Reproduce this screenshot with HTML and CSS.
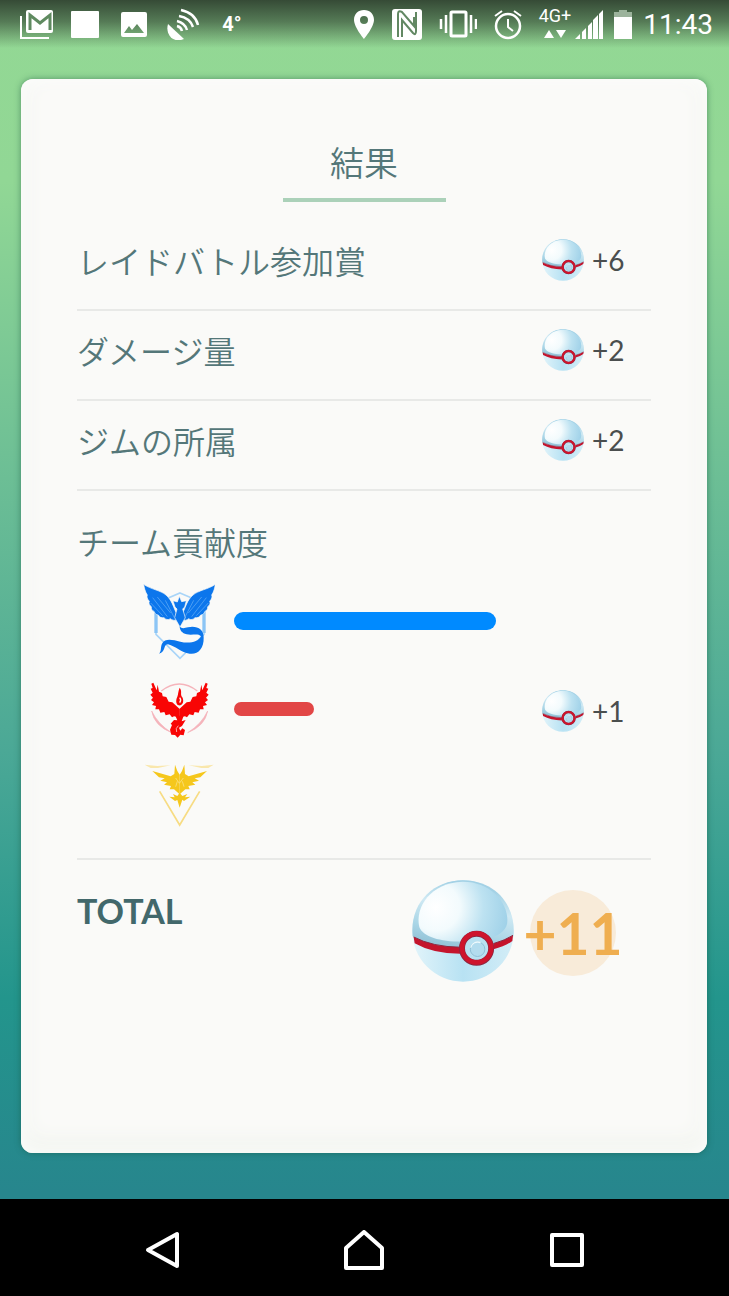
FILE: index.html
```html
<!DOCTYPE html>
<html lang="ja">
<head>
  <meta charset="UTF-8">
  <meta name="viewport" content="width=device-width, initial-scale=1">
  <title>結果</title>
  <link rel="stylesheet" href="styles.css">
</head>
<body>
  <!-- Shared ball drawing, used by every reward -->
  <svg class="defs" width="0" height="0" aria-hidden="true">
    <defs>
      <radialGradient id="ballTop" gradientUnits="userSpaceOnUse" cx="110" cy="140" r="240">
        <stop offset="0" stop-color="#ffffff"/>
        <stop offset="0.3" stop-color="#f3fbfd"/>
        <stop offset="0.6" stop-color="#bde2f1"/>
        <stop offset="1" stop-color="#98cde6"/>
      </radialGradient>
      <linearGradient id="ballBottom" x1="0" y1="0" x2="1" y2="0">
        <stop offset="0" stop-color="#e2f4fa"/>
        <stop offset="0.5" stop-color="#b8e2f3"/>
        <stop offset="1" stop-color="#d3edf7"/>
      </linearGradient>
      <linearGradient id="ballRim" x1="0" y1="1" x2="0.3" y2="0">
        <stop offset="0" stop-color="#86b8ce"/>
        <stop offset="0.35" stop-color="#a9d5e6"/>
        <stop offset="0.7" stop-color="#cfe9f3"/>
        <stop offset="1" stop-color="#a3d1e5"/>
      </linearGradient>
    </defs>
    <symbol id="ball" viewBox="38 58 308 308">
      <circle cx="192" cy="212" r="153" fill="url(#ballBottom)"/>
      <path d="M40 228C30 130 100 59 192 59S354 130 344 228C300 262 240 268 182 268S80 250 40 228Z" fill="url(#ballRim)"/>
      <path d="M60 200C46 140 95 66 190 63C270 62 326 120 326 180C326 215 290 240 200 244C130 246 72 232 60 200Z" fill="url(#ballTop)"/>
      <path d="M43 230Q100 260 184 261V281Q100 280 46 249ZM284 250Q320 240 343 225L341 242Q320 258 284 267Z" fill="#c4142c"/>
      <path d="M43 230Q100 260 184 261M284 250Q320 240 343 225" fill="none" stroke="#8c2740" stroke-width="3"/>
      <circle cx="233" cy="264" r="44" fill="#b9e1f1" stroke="#8c2740" stroke-width="18"/>
      <circle cx="233" cy="263" r="44" fill="none" stroke="#ce142c" stroke-width="14"/>
      <circle cx="236" cy="267" r="22" fill="#b3dcee" stroke="#8fbfd6" stroke-width="3"/>
      <path d="M215 262A22 22 0 0 1 245 247" fill="none" stroke="#effafd" stroke-width="4"/>
    </symbol>
  </svg>

  <header class="status-bar">
    <div class="status-left">
      <svg viewBox="0 0 36 32" width="36" height="32" aria-label="Gmail">
        <path d="M3 8v22h28" fill="none" stroke="#fff" stroke-width="2"/>
        <rect x="8" y="2" width="27" height="23" rx="2" fill="#fff"/>
        <path d="M12 22V7l10 8 10-8v15" fill="none" stroke="#5f8a60" stroke-width="3"/>
      </svg>
      <svg viewBox="0 0 36 32" width="36" height="32" aria-label="App">
        <rect x="4" y="3" width="28" height="27" rx="1" fill="#fff"/>
      </svg>
      <svg viewBox="0 0 36 32" width="36" height="32" aria-label="Screenshot">
        <path d="M7 4h22a2 2 0 0 1 2 2v21a2 2 0 0 1-2 2H7a2 2 0 0 1-2-2V6a2 2 0 0 1 2-2ZM8 25h20l-7-9-5 6-3-4Z" fill="#fff" fill-rule="evenodd"/>
      </svg>
      <svg viewBox="0 0 36 32" width="36" height="32" aria-label="Satellite">
        <path d="M3 16C0 26 8 36 19 31Z" fill="#fff"/>
        <g fill="none" stroke="#fff" stroke-width="2.500">
          <path d="M12 18q4 1 5 5M12 13q8 2 10 9M14 8q11 2 14 11M16 2q14 3 17 15"/>
        </g>
      </svg>
      <span class="temperature">4°</span>
    </div>
    <div class="status-right">
      <svg viewBox="0 0 22 32" width="22" height="32" aria-label="Location">
        <path d="M11 2C5 2 1 6 1 12c0 7 10 19 10 19s10-12 10-19C21 6 17 2 11 2Zm0 6a4 4 0 1 1 0 8 4 4 0 0 1 0-8Z" fill="#fff" fill-rule="evenodd"/>
      </svg>
      <svg viewBox="0 0 32 32" width="32" height="32" aria-label="NFC">
        <rect x="1" y="1" width="30" height="31" rx="3" fill="#fff"/>
        <path d="M7 29V6q0-4 4-2l12 14V9M11 29V12l11 13q3 3 3-2V4" fill="none" stroke="#628863" stroke-width="2"/>
      </svg>
      <svg viewBox="0 0 38 32" width="38" height="32" aria-label="Vibrate">
        <rect x="12" y="4" width="15" height="24" rx="1" fill="none" stroke="#fff" stroke-width="3"/>
        <path d="M7 7v18M32 7v18M2 11v10M37 11v10" fill="none" stroke="#fff" stroke-width="2.500"/>
      </svg>
      <svg viewBox="0 0 30 32" width="30" height="32" aria-label="Alarm">
        <circle cx="15" cy="18" r="12" fill="none" stroke="#fff" stroke-width="2.500"/>
        <path d="M15 11v8l5 4M2 8l7-5M28 8l-7-5" fill="none" stroke="#fff" stroke-width="2"/>
      </svg>
      <div class="network">
        <div class="network-type">
          <span>4G+</span>
          <svg viewBox="0 0 22 10" width="22" height="10" aria-hidden="true">
            <path d="M0 9L5 1l5 8ZM12 1h10l-5 8Z" fill="#fff"/>
          </svg>
        </div>
        <svg viewBox="0 0 28 32" width="28" height="32" aria-label="Signal">
          <path d="M0 31L5 26v5ZM7 24l4-4v11H7ZM13 18l4-4v17h-4ZM18 12l5-5v24h-5ZM24 6l4-4v29h-4Z" fill="#fff"/>
        </svg>
      </div>
      <svg class="battery" viewBox="0 0 20 32" width="20" height="32" aria-label="Battery">
        <path d="M6 2h8v2h5v6H1V4h5Z" fill="#9cb39c"/>
        <path d="M1 9h18v22H1Z" fill="#fff"/>
      </svg>
      <time class="clock">11:43</time>
    </div>
  </header>

  <main class="screen">
    <section class="card">
      <h1 class="title">結果</h1>

      <div class="row">
        <span class="label">レイドバトル参加賞</span>
        <span class="reward"><svg class="ball"><use href="#ball"/></svg>+6</span>
      </div>
      <div class="row">
        <span class="label">ダメージ量</span>
        <span class="reward"><svg class="ball"><use href="#ball"/></svg>+2</span>
      </div>
      <div class="row">
        <span class="label">ジムの所属</span>
        <span class="reward"><svg class="ball"><use href="#ball"/></svg>+2</span>
      </div>

      <div class="teams">
        <h2 class="label">チーム貢献度</h2>
        <div class="team">
          <svg class="emblem" viewBox="39 30 216 240" aria-label="Mystic">
            <path d="M150 66L222 97V190L150 262L78 190V97Z" fill="none" stroke="#a9d5f8" stroke-width="5"/>
            <path d="M78 104V186M222 104V186" stroke="#8cc5f5" stroke-width="10"/>
            <g fill="#0c76ec" stroke="#fafaf8" stroke-width="2">
              <path id="mysticWing" d="M41 40C62 55 92 58 108 72C126 88 130 108 138 124L140 146C134 150 126 147 121 143C115 148 107 146 102 140C95 141 88 139 85 132C79 132 74 128 73 122C67 119 63 114 64 107C58 103 55 97 58 91C51 83 50 77 52 72C45 61 43 51 41 40Z"/>
              <use href="#mysticWing" transform="matrix(-1 0 0 1 297 0)"/>
              <path d="M148 76L155 92L169 89L164 108L158 114L166 140L150 168L134 140L141 114L135 108L129 89L142 93Z"/>
            </g>
            <path d="M82 78L122 126M68 80L112 137M62 96L98 134M106 88L133 140M215 78L175 126M229 80L185 137M235 96L199 134M191 88L164 140" stroke="#69b0f6" stroke-width="2"/>
            <path d="M149 166C155 174 162 172 174 169C200 163 222 175 221 200C222 232 203 252 179 248C153 245 138 226 114 220C99 220 108 244 87 248C95 240 91 229 96 218C106 200 128 207 151 212C174 218 205 215 213 196C204 186 187 194 170 190C156 187 149 178 149 166Z" fill="#0c76ec"/>
          </svg>
          <div class="track"><div class="bar bar-mystic" style="width: 85%"></div></div>
        </div>
        <div class="team">
          <svg class="emblem" viewBox="39 12 216 240" aria-label="Valor">
            <path d="M94 78Q148 36 202 78" fill="none" stroke="#f5b4bb" stroke-width="4"/>
            <path d="M65 138Q73 183 125 203Q84 178 65 138ZM233 138Q225 183 173 203Q214 178 233 138Z" fill="#f5b4bb" stroke="#f5b4bb" stroke-width="2"/>
            <g fill="#f80505">
              <path id="valorWing" d="M149 157L132 154L126 157L119 148L107 151L103 141L91 143L87 133L76 133L78 123L66 120L72 112L63 105L69 98L61 89L68 83L62 71L68 69L64 56L70 53L80 76L83 59L87 80L96 84L98 94L109 96L116 110L127 112L149 132Z"/>
              <use href="#valorWing" transform="matrix(-1 0 0 1 297 0)"/>
              <path d="M149 68C158 80 149 87 157 97C164 111 156 123 146 121C137 118 137 105 142 95C145 88 144 79 149 68Z"/>
              <path d="M136 152H161L155 169L167 165L156 183L147 188L151 197L157 190L165 195L161 211L151 209L143 218L135 210L124 209L120 194L126 180L122 176L132 165L142 166Z"/>
            </g>
            <path d="M149 98Q155 105 149 113" fill="none" stroke="#fafaf8" stroke-width="4"/>
            <path d="M140 201Q135 190 145 182" fill="none" stroke="#fafaf8" stroke-width="2"/>
          </svg>
          <div class="track"><div class="bar bar-valor" style="width: 26%"></div></div>
          <span class="reward"><svg class="ball"><use href="#ball"/></svg>+1</span>
        </div>
        <div class="team">
          <svg class="emblem" viewBox="39 21 216 240" aria-label="Instinct">
            <path d="M44 44L62 54H84L122 46L82 48ZM251 44L235 54H214L176 46L216 48Z" fill="#f9e7ac"/>
            <path d="M89 124L149 225L209 124" fill="none" stroke="#f7dc83" stroke-width="5"/>
            <g fill="#f5c71c">
              <path id="instinctWing" d="M149 74L142 63L135 44L133 72L122 79L67 63L87 82L104 85L91 92L111 97L102 104L123 108L119 118L132 118L149 133Z"/>
              <use href="#instinctWing" transform="matrix(-1 0 0 1 298 0)"/>
              <path d="M129 132L142 138L149 128L157 138L172 132L165 142L181 140L162 153L157 149L149 173L142 150L135 153L118 140L134 142Z"/>
            </g>
            <path d="M137 84L148 100L160 84M137 110L142 94M162 110L157 94" fill="none" stroke="#fbe799" stroke-width="2"/>
          </svg>
          <div class="track"></div>
        </div>
      </div>

      <div class="total">
        <span class="total-label">TOTAL</span>
        <svg class="ball ball-large"><use href="#ball"/></svg>
        <strong class="total-count">+11</strong>
      </div>
    </section>
  </main>

  <nav class="nav-bar">
    <button type="button" aria-label="Back">
      <svg viewBox="0 0 40 40" width="40" height="40"><path d="M35 4V36L6 20Z"/></svg>
    </button>
    <button type="button" aria-label="Home">
      <svg viewBox="0 0 40 40" width="40" height="40"><path d="M20 2L38 18V38H2V18Z"/></svg>
    </button>
    <button type="button" aria-label="Recent apps">
      <svg viewBox="0 0 40 40" width="40" height="40"><path d="M5 5H35V35H5Z"/></svg>
    </button>
  </nav>
</body>
</html>
```

FILE: styles.css
```css
* {
  box-sizing: border-box;
}
body {
  margin: 0;
  min-height: 100vh;
  display: flex;
  flex-direction: column;
  background: linear-gradient(#93d894 0, #91d795 14%, #6fc095 35%, #4ba896 58%, #23958c 77%, #27868d 92%);
  font-family: Lato, "Noto Sans CJK JP", sans-serif;
  color: #4a4e4e;
}
.defs {
  position: absolute;
}

/* Android status bar */
.status-bar {
  display: flex;
  justify-content: space-between;
  height: 48px;
  padding: 8px 16px 0 18px;
  background: linear-gradient(rgba(24, 30, 24, 0.76), rgba(24, 30, 24, 0.5) 45%, rgba(24, 30, 24, 0));
  color: #fff;
  font-family: Roboto, sans-serif;
}
.status-left,
.status-right,
.network {
  display: flex;
  align-items: flex-start;
}
.status-left {
  gap: 13px;
}
.status-right {
  gap: 16px;
}
.temperature {
  width: 36px;
  font-size: 20px;
  font-weight: bold;
  line-height: 32px;
  text-align: center;
}
.network {
  gap: 4px;
}
.network-type {
  display: flex;
  flex-direction: column;
  align-items: center;
  font-size: 18px;
  line-height: 16px;
  gap: 5px;
}
.battery {
  margin: 0 -6px;
}
.clock {
  font-size: 28px;
  line-height: 34px;
}

/* Result card */
.screen {
  flex: 1;
  display: flex;
  padding: 31px 22px 46px 21px;
}
.card {
  flex: 1;
  padding: 62px 56px 0;
  border-radius: 12px;
  background: #fafaf8;
  box-shadow: 0 0 6px rgba(20, 80, 60, 0.5), inset 0 0 20px #fff, inset 0 -8px 24px #edf1e9;
}
.title {
  width: 163px;
  margin: 0 auto 19px;
  padding-bottom: 13px;
  border-bottom: 4px solid #abd1b9;
  color: #547779;
  font-size: 34px;
  font-weight: 350;
  line-height: 44px;
  text-align: center;
}
.label {
  margin: 0;
  color: #547779;
  font-size: 32px;
  font-weight: 350;
  line-height: 44px;
}
.row {
  display: flex;
  align-items: center;
  justify-content: space-between;
  height: 90px;
  padding-bottom: 6px;
  border-bottom: 2px solid #e8e9e7;
}
.reward {
  display: flex;
  align-items: center;
  gap: 8px;
  width: 109px;
  padding-bottom: 4px;
  font-size: 28px;
  line-height: 40px;
}
.ball {
  width: 42px;
  height: 42px;
}

/* Team contribution */
.teams {
  padding: 30px 0 17px;
  border-bottom: 2px solid #e8e9e7;
}
.teams .label {
  margin-bottom: 12px;
}
.team {
  display: grid;
  grid-template-columns: 72px 1fr 109px;
  align-items: center;
  height: 88px;
  padding-left: 66px;
}
.team .reward {
  padding: 4px 0 0;
}
.emblem {
  width: 72px;
  height: 80px;
}
.track {
  margin-left: 19px;
}
.bar {
  border-radius: 9px;
}
.bar-mystic {
  height: 18px;
  background: #008aff;
}
.bar-valor {
  height: 14px;
  background: #e24646;
}

/* Total */
.total {
  display: flex;
  align-items: flex-start;
  gap: 16px;
  padding: 20px 35px 0 0;
}
.total-label {
  margin-right: auto;
  padding-top: 9px;
  color: #42686b;
  font-size: 34px;
  font-weight: bold;
  line-height: 44px;
}
.ball-large {
  width: 102px;
  height: 102px;
}
.total-count {
  display: flex;
  align-items: center;
  justify-content: center;
  width: 86px;
  height: 86px;
  margin-top: 10px;
  border-radius: 50%;
  background: #f8ebd9;
  color: #efae50;
  font-size: 57px;
  font-weight: bold;
}

/* Android navigation */
.nav-bar {
  display: flex;
  height: 97px;
  padding: 0 61px;
  background: #000;
}
.nav-bar button {
  flex: 1;
  padding: 8px 0 0;
  border: 0;
  background: none;
}
.nav-bar path {
  fill: none;
  stroke: #fff;
  stroke-width: 4px;
  stroke-linejoin: round;
}
```
